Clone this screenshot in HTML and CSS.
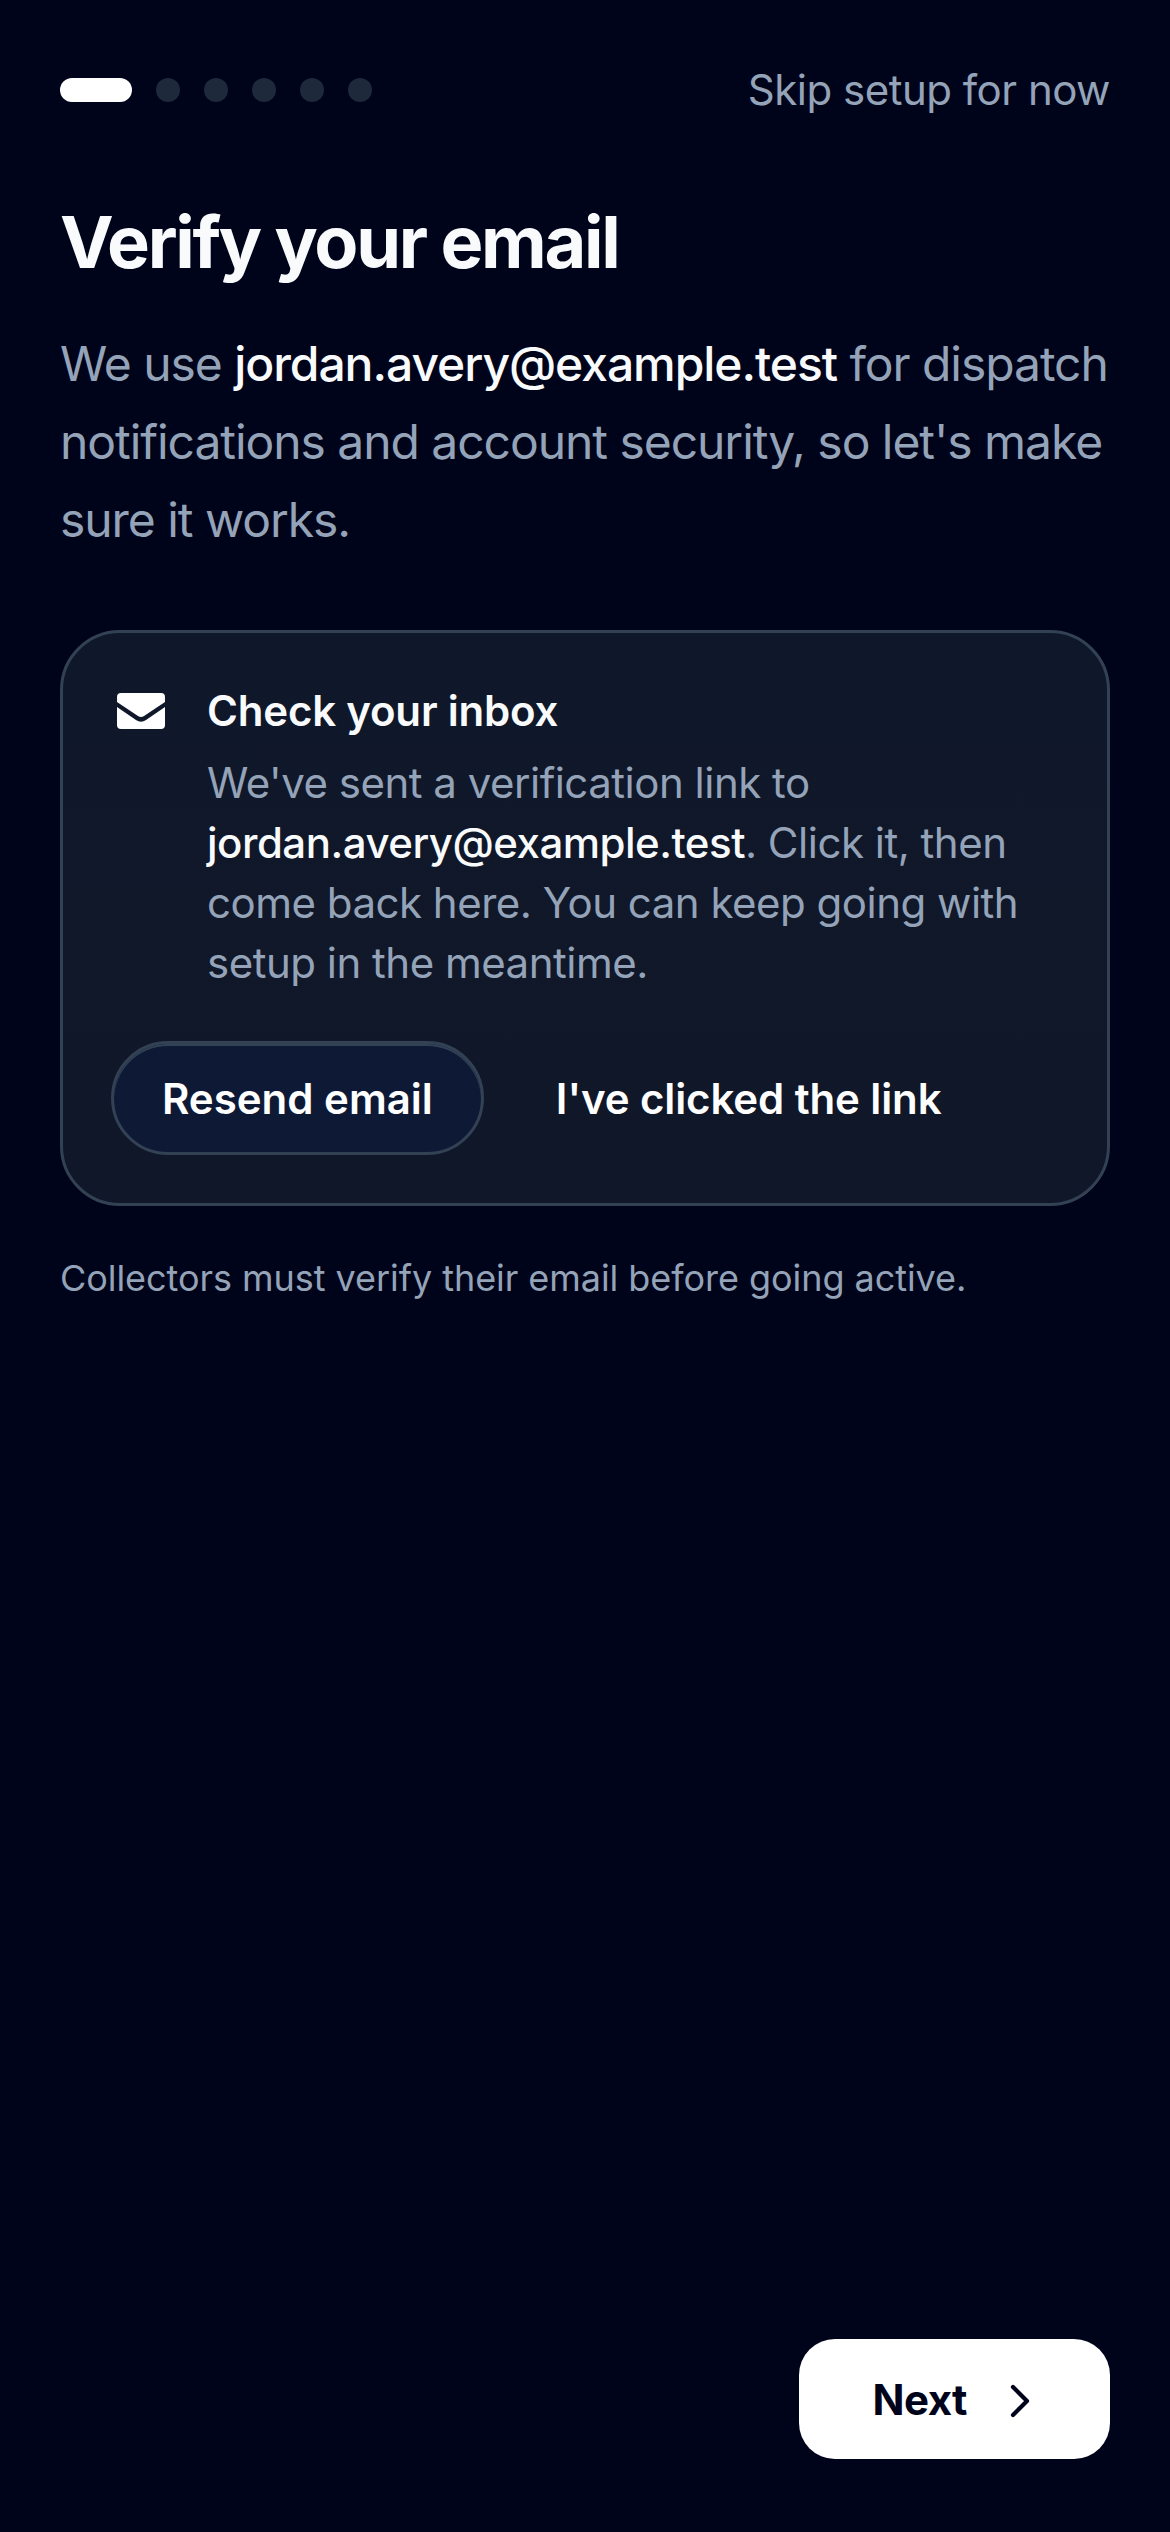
FILE: index.html
```html
<!DOCTYPE html>
<html lang="en">
<head>
  <meta charset="UTF-8">
  <title>Verify your email</title>
  <link rel="stylesheet" href="styles.css">
</head>
<body>

<div class="screen">
  <div class="top-row">
    <div class="steps">
      <span class="step active"></span>
      <span class="step"></span>
      <span class="step"></span>
      <span class="step"></span>
      <span class="step"></span>
      <span class="step"></span>
    </div>
    <a class="skip">Skip setup for now</a>
  </div>

  <h1>Verify your email</h1>
  <p class="intro">We use <strong>jordan.avery@example.test</strong> for dispatch notifications and account security, so let's make sure it works.</p>

  <div class="card">
    <div class="card-head">
      <svg class="mail-icon" viewBox="0 0 48 36" width="48" height="36">
        <path fill="#fff" d="M4 0h40a4 4 0 0 1 4 4v5L27 23a5.500 5.500 0 0 1-6 0L0 9V4a4 4 0 0 1 4-4zM0 14l19 13a8.500 8.500 0 0 0 10 0l19-13v18a4 4 0 0 1-4 4H4a4 4 0 0 1-4-4z"/>
      </svg>
      <div class="card-text">
        <h3>Check your inbox</h3>
        <p>We've sent a verification link to <strong>jordan.avery@example.test</strong>. Click it, then come back here. You can keep going with setup in the meantime.</p>
      </div>
    </div>
    <div class="card-actions">
      <button class="btn-resend">Resend email</button>
      <button class="btn-clicked">I've clicked the link</button>
    </div>
  </div>

  <p class="note">Collectors must verify their email before going active.</p>

  <div class="footer">
    <button class="btn-next">
      Next
      <svg viewBox="0 0 48 48" width="48" height="48">
        <path d="M17 12l14 14-14 14" fill="none" stroke="#00041a" stroke-width="4.200" stroke-linecap="round" stroke-linejoin="round"/>
      </svg>
    </button>
  </div>
</div>

</body>
</html>
```

FILE: styles.css
```css
* {
  margin: 0;
  padding: 0;
  box-sizing: border-box;
}

html, body {
  height: 100%;
  font-family: Inter, 'Noto Sans', sans-serif;
  background: #00041a;
  overflow: hidden;
}

.screen {
  display: flex;
  flex-direction: column;
  height: 2532px;
  padding: 60px 60px 73px;
}

.top-row {
  display: flex;
  justify-content: space-between;
  align-items: center;
  height: 60px;
}

.steps {
  display: flex;
  gap: 24px;
}

.step {
  width: 24px;
  height: 24px;
  border-radius: 12px;
  background: #1e293b;
}

.step.active {
  width: 72px;
  background: #fff;
}

.skip {
  margin-bottom: 2px;
  font-size: 42px;
  letter-spacing: -0.5px;
  color: #94a3b8;
}

h1 {
  margin-top: 80px;
  font-size: 72px;
  line-height: 84px;
  font-weight: 700;
  letter-spacing: -2.3px;
  color: #f8fafc;
}

.intro {
  margin-top: 41px;
  font-size: 48px;
  line-height: 78px;
  letter-spacing: -1.05px;
  color: #94a3b8;
}

.intro strong {
  font-weight: 500;
  color: #f8fafc;
}

.card {
  margin-top: 71px;
  padding: 48px;
  background: linear-gradient(#0f182a, #101729);
  border: 3px solid #334155;
  border-radius: 60px;
}

.card-head {
  display: flex;
  gap: 42px;
}

.mail-icon {
  flex-shrink: 0;
  margin: 12px 0 0 6px;
}

.card-text h3 {
  font-size: 42px;
  line-height: 60px;
  font-weight: 600;
  letter-spacing: -0.2px;
  color: #f8fafc;
}

.card-text p {
  margin-top: 12px;
  font-size: 42px;
  line-height: 60px;
  letter-spacing: -0.5px;
  color: #94a3b8;
}

.card-text strong {
  font-weight: 500;
  color: #f8fafc;
}

.card-actions {
  display: flex;
  align-items: center;
  gap: 24px;
  margin-top: 48px;
}

button {
  font-family: inherit;
  border: none;
  cursor: pointer;
}

.btn-resend {
  height: 114px;
  padding: 0 48px;
  font-size: 42px;
  font-weight: 600;
  color: #fff;
  background: #0e1a35;
  border: 3px solid #334155;
  border-radius: 57px;
  box-shadow: inset 0 2px 0 #334155;
}

.btn-clicked {
  height: 114px;
  padding: 0 48px;
  font-size: 42px;
  font-weight: 600;
  letter-spacing: -0.1px;
  color: #fff;
  background: none;
}

.note {
  margin-top: 48px;
  font-size: 36px;
  line-height: 48px;
  letter-spacing: -0.05px;
  color: #94a3b8;
}

.footer {
  display: flex;
  justify-content: flex-end;
  margin-top: auto;
}

.btn-next {
  display: flex;
  align-items: center;
  gap: 29px;
  height: 120px;
  padding: 0 66px 0 73px;
  font-size: 42px;
  font-weight: 700;
  letter-spacing: -0.5px;
  color: #00041a;
  background: #fff;
  border-radius: 36px;
}
```
